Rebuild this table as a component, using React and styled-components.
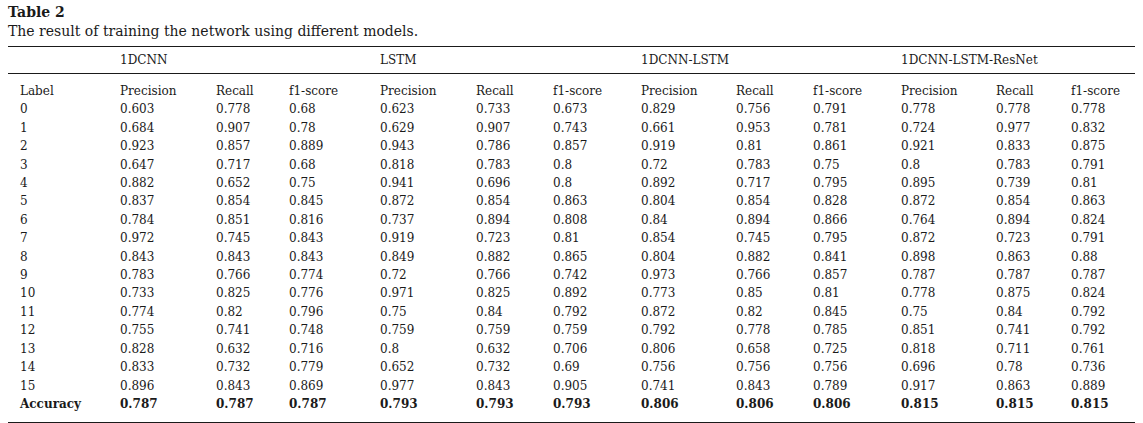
import React from 'react';
import styled, { createGlobalStyle } from 'styled-components';

const GlobalStyle = createGlobalStyle`
  html, body {
    margin: 0;
    padding: 0;
    background: #ffffff;
  }
  body {
    font-family: 'DejaVu Serif', 'Liberation Serif', serif;
    color: #1a1a1a;
  }
`;

const Page = styled.div`
  padding: 3px 8px 0 8px;
`;

const Title = styled.div`
  font-weight: bold;
  font-size: 14px;
  line-height: 18px;
`;

const Caption = styled.div`
  font-size: 14px;
  line-height: 20px;
  margin-bottom: 5px;
`;

const Table = styled.table`
  width: 1127px;
  border-collapse: collapse;
  table-layout: fixed;
  font-size: 12px;
  line-height: 18.4px;

  thead tr {
    border-top: 1px solid #1a1a1a;
    border-bottom: 1px solid #1a1a1a;
  }
  tbody {
    border-bottom: 1px solid #1a1a1a;
  }
`;

const GroupCell = styled.th`
  font-weight: normal;
  text-align: left;
  padding: 6px 0 6px ${(p) => (p.$first ? '12px' : '0')};
  line-height: 14px;
  white-space: nowrap;
`;

const Row = styled.tr`
  font-weight: ${(p) => (p.$bold ? 'bold' : 'normal')};
  td {
    padding-top: ${(p) => (p.$top ? '8px' : '0')};
    padding-bottom: ${(p) => (p.$bottom ? '9px' : '0')};
  }
`;

const Cell = styled.td`
  padding-left: ${(p) => (p.$first ? '12px' : '0')};
  padding-right: 0;
  white-space: nowrap;
  text-align: left;
`;

const widths = [112, 96, 73, 91, 96, 77, 88, 95, 77, 88, 95, 75, 64];

const groups = ['1DCNN', 'LSTM', '1DCNN-LSTM', '1DCNN-LSTM-ResNet'];

const rows = [
  ['0', '0.603', '0.778', '0.68', '0.623', '0.733', '0.673', '0.829', '0.756', '0.791', '0.778', '0.778', '0.778'],
  ['1', '0.684', '0.907', '0.78', '0.629', '0.907', '0.743', '0.661', '0.953', '0.781', '0.724', '0.977', '0.832'],
  ['2', '0.923', '0.857', '0.889', '0.943', '0.786', '0.857', '0.919', '0.81', '0.861', '0.921', '0.833', '0.875'],
  ['3', '0.647', '0.717', '0.68', '0.818', '0.783', '0.8', '0.72', '0.783', '0.75', '0.8', '0.783', '0.791'],
  ['4', '0.882', '0.652', '0.75', '0.941', '0.696', '0.8', '0.892', '0.717', '0.795', '0.895', '0.739', '0.81'],
  ['5', '0.837', '0.854', '0.845', '0.872', '0.854', '0.863', '0.804', '0.854', '0.828', '0.872', '0.854', '0.863'],
  ['6', '0.784', '0.851', '0.816', '0.737', '0.894', '0.808', '0.84', '0.894', '0.866', '0.764', '0.894', '0.824'],
  ['7', '0.972', '0.745', '0.843', '0.919', '0.723', '0.81', '0.854', '0.745', '0.795', '0.872', '0.723', '0.791'],
  ['8', '0.843', '0.843', '0.843', '0.849', '0.882', '0.865', '0.804', '0.882', '0.841', '0.898', '0.863', '0.88'],
  ['9', '0.783', '0.766', '0.774', '0.72', '0.766', '0.742', '0.973', '0.766', '0.857', '0.787', '0.787', '0.787'],
  ['10', '0.733', '0.825', '0.776', '0.971', '0.825', '0.892', '0.773', '0.85', '0.81', '0.778', '0.875', '0.824'],
  ['11', '0.774', '0.82', '0.796', '0.75', '0.84', '0.792', '0.872', '0.82', '0.845', '0.75', '0.84', '0.792'],
  ['12', '0.755', '0.741', '0.748', '0.759', '0.759', '0.759', '0.792', '0.778', '0.785', '0.851', '0.741', '0.792'],
  ['13', '0.828', '0.632', '0.716', '0.8', '0.632', '0.706', '0.806', '0.658', '0.725', '0.818', '0.711', '0.761'],
  ['14', '0.833', '0.732', '0.779', '0.652', '0.732', '0.69', '0.756', '0.756', '0.756', '0.696', '0.78', '0.736'],
  ['15', '0.896', '0.843', '0.869', '0.977', '0.843', '0.905', '0.741', '0.843', '0.789', '0.917', '0.863', '0.889'],
];

const accuracy = ['Accuracy', '0.787', '0.787', '0.787', '0.793', '0.793', '0.793', '0.806', '0.806', '0.806', '0.815', '0.815', '0.815'];

const metricHeader = ['Label', ...groups.flatMap(() => ['Precision', 'Recall', 'f1-score'])];

const DataRow = ({ values, ...rest }) => (
  <Row {...rest}>
    {values.map((v, i) => (
      <Cell key={i} $first={i === 0}>
        {v}
      </Cell>
    ))}
  </Row>
);

const App = () => (
  <Page>
    <GlobalStyle />
    <Title>Table 2</Title>
    <Caption>The result of training the network using different models.</Caption>
    <Table>
      <colgroup>
        {widths.map((w, i) => (
          <col key={i} style={{ width: w }} />
        ))}
      </colgroup>
      <thead>
        <tr>
          <GroupCell $first />
          {groups.map((g) => (
            <GroupCell key={g} colSpan={3}>
              {g}
            </GroupCell>
          ))}
        </tr>
      </thead>
      <tbody>
        <DataRow values={metricHeader} $top />
        {rows.map((r) => (
          <DataRow key={r[0]} values={r} />
        ))}
        <DataRow values={accuracy} $bold $bottom />
      </tbody>
    </Table>
  </Page>
);

export default App;
